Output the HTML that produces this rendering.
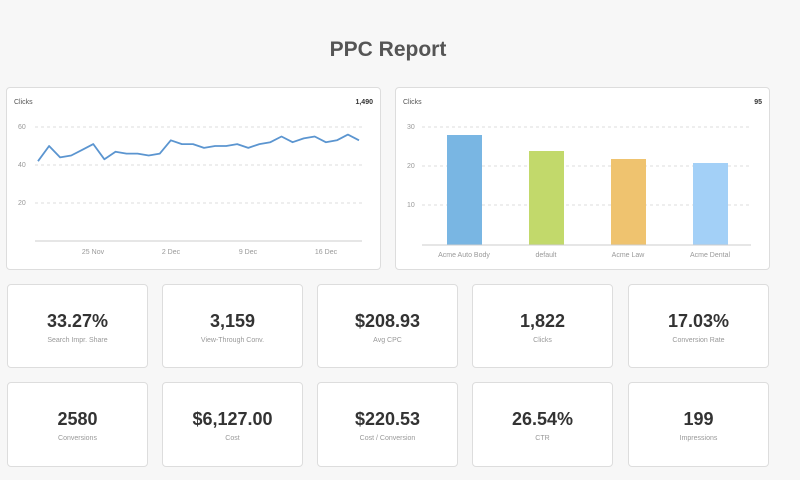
<!DOCTYPE html>
<html><head><style>
body{margin:0;width:800px;height:480px;background:#f7f7f7;font-family:"Liberation Sans",Arial,sans-serif;position:relative;overflow:hidden}
h1{position:absolute;top:38px;left:0;width:776px;text-align:center;margin:0;font-size:21px;font-weight:bold;color:#555}
.card{position:absolute;background:#fff;border:1px solid #ddd;border-radius:4px;box-sizing:border-box}
.st .v{position:absolute;top:26px;width:100%;text-align:center;font-size:18px;font-weight:bold;color:#333}
.st .l{position:absolute;top:52px;width:100%;text-align:center;font-size:7px;color:#999}
</style></head><body>
<h1>PPC Report</h1>
<div class="card" style="left:6px;top:87px;width:375px;height:183px"></div>
<div class="card" style="left:395px;top:87px;width:375px;height:183px"></div>
<svg style="position:absolute;left:0;top:0" width="800" height="480" font-family="Liberation Sans,Arial,sans-serif">
<text x="14" y="104" font-size="7" fill="#555">Clicks</text>
<text x="373" y="104" font-size="7" fill="#333" font-weight="bold" text-anchor="end">1,490</text>
<g stroke="#ddd" stroke-dasharray="3,3" stroke-width="1"><line x1="35" y1="127" x2="362" y2="127"/><line x1="35" y1="165" x2="362" y2="165"/><line x1="35" y1="203" x2="362" y2="203"/></g>
<line x1="35" y1="241" x2="362" y2="241" stroke="#ccc"/>
<g font-size="7" fill="#999"><text x="18" y="129">60</text><text x="18" y="167">40</text><text x="18" y="205">20</text>
<text x="93" y="254" text-anchor="middle">25 Nov</text><text x="171" y="254" text-anchor="middle">2 Dec</text><text x="248" y="254" text-anchor="middle">9 Dec</text><text x="326" y="254" text-anchor="middle">16 Dec</text></g>
<polyline fill="none" stroke="#5b95d0" stroke-width="1.8" stroke-linejoin="round" points="38,161.2 49.1,146 60.1,157.4 71.2,155.5 82.3,149.8 93.3,144.1 104.4,159.3 115.5,151.7 126.5,153.6 137.6,153.6 148.7,155.5 159.8,153.6 170.8,140.3 181.9,144.1 193,144.1 204,147.9 215.1,146 226.2,146 237.2,144.1 248.3,147.9 259.4,144.1 270.4,142.2 281.5,136.5 292.6,142.2 303.7,138.4 314.7,136.5 325.8,142.2 336.9,140.3 347.9,134.6 359,140.3"/>
<text x="403" y="104" font-size="7" fill="#555">Clicks</text>
<text x="762" y="104" font-size="7" fill="#333" font-weight="bold" text-anchor="end">95</text>
<g stroke="#ddd" stroke-dasharray="3,3"><line x1="422" y1="127" x2="751" y2="127"/><line x1="422" y1="166" x2="751" y2="166"/><line x1="422" y1="205" x2="751" y2="205"/></g>
<g font-size="7" fill="#999"><text x="407" y="129">30</text><text x="407" y="168">20</text><text x="407" y="207">10</text>
<text x="464" y="257" text-anchor="middle">Acme Auto Body</text><text x="546" y="257" text-anchor="middle">default</text><text x="628" y="257" text-anchor="middle">Acme Law</text><text x="710" y="257" text-anchor="middle">Acme Dental</text></g>
<rect x="447" y="135" width="35" height="110" fill="#79b6e3"/>
<rect x="529" y="151" width="35" height="94" fill="#c2d96b"/>
<rect x="611" y="159" width="35" height="86" fill="#efc36f"/>
<rect x="693" y="163" width="35" height="82" fill="#a3d0f7"/>
<line x1="422" y1="245" x2="751" y2="245" stroke="#ccc"/>
</svg>
<div class="card st" style="left:7px;top:284px;width:141px;height:84px"><div class="v">33.27%</div><div class="l">Search Impr. Share</div></div>
<div class="card st" style="left:162px;top:284px;width:141px;height:84px"><div class="v">3,159</div><div class="l">View-Through Conv.</div></div>
<div class="card st" style="left:317px;top:284px;width:141px;height:84px"><div class="v">$208.93</div><div class="l">Avg CPC</div></div>
<div class="card st" style="left:472px;top:284px;width:141px;height:84px"><div class="v">1,822</div><div class="l">Clicks</div></div>
<div class="card st" style="left:628px;top:284px;width:141px;height:84px"><div class="v">17.03%</div><div class="l">Conversion Rate</div></div>
<div class="card st" style="left:7px;top:382px;width:141px;height:85px"><div class="v">2580</div><div class="l">Conversions</div></div>
<div class="card st" style="left:162px;top:382px;width:141px;height:85px"><div class="v">$6,127.00</div><div class="l">Cost</div></div>
<div class="card st" style="left:317px;top:382px;width:141px;height:85px"><div class="v">$220.53</div><div class="l">Cost / Conversion</div></div>
<div class="card st" style="left:472px;top:382px;width:141px;height:85px"><div class="v">26.54%</div><div class="l">CTR</div></div>
<div class="card st" style="left:628px;top:382px;width:141px;height:85px"><div class="v">199</div><div class="l">Impressions</div></div>
</body></html>
